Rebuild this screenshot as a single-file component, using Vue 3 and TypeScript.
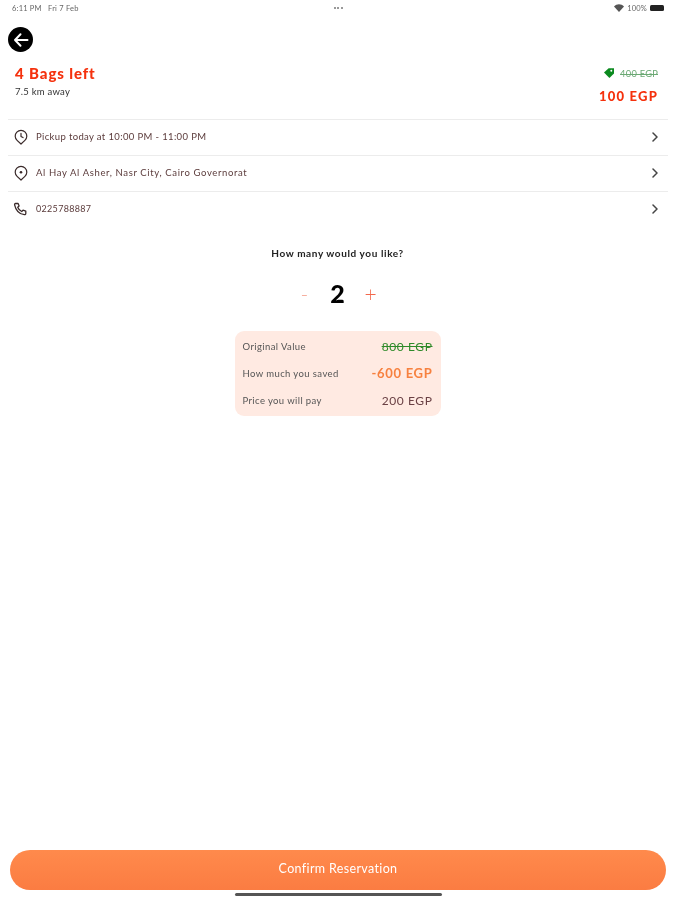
<template>
  <div class="page">
    <div class="status">
      <span class="status-time">6:11 PM&nbsp;&nbsp;&nbsp;Fri 7 Feb</span>
      <span class="status-dots"><i></i><i></i><i></i></span>
      <span class="status-right">
        <svg width="10" height="8" viewBox="0 0 10 8"><path d="M0 2.400C2.800-.5 7.200-.5 10 2.400L5 8Z" fill="#555" /></svg>
        <span>100%</span>
        <span class="battery"></span>
      </span>
    </div>

    <button class="back" aria-label="Back">
      <svg width="18" height="18" viewBox="0 0 18 18" fill="none" stroke="#fff" stroke-width="2" stroke-linecap="round" stroke-linejoin="round">
        <path d="M15.500 9H3M8.500 3.200 3 9l5.500 5.800" />
      </svg>
    </button>

    <div class="summary">
      <div>
        <div class="bags">4 Bags left</div>
        <div class="distance">7.5 km away</div>
      </div>
      <div class="prices">
        <div class="old-line">
          <svg width="12" height="12" viewBox="0 0 12 12"><path d="M1 5.500 5.600 1.200H11v5.200L6.400 11Z" fill="#0b8a1f" /><circle cx="8.300" cy="3.800" r="1" fill="#fff" /></svg>
          <span class="old-price">400 EGP</span>
        </div>
        <div class="new-price">100 EGP</div>
      </div>
    </div>

    <ul class="rows">
      <li v-for="row in rows" :key="row.text" class="row">
        <svg v-if="row.icon === 'clock'" class="row-icon" width="16" height="16" viewBox="0 0 16 16" fill="none" stroke="#3a2a2a" stroke-width="1.2" stroke-linecap="round" stroke-linejoin="round">
          <path d="M8 15 4.100 11.400A5.800 5.800 0 1 1 11.900 11.400Z" />
          <path d="M8 4.400V7.400L10 8.600" />
        </svg>
        <svg v-else-if="row.icon === 'pin'" class="row-icon" width="16" height="16" viewBox="0 0 16 16" fill="none" stroke="#3a2a2a" stroke-width="1.2" stroke-linejoin="round">
          <path d="M8 15 4.100 11.400A5.800 5.800 0 1 1 11.900 11.400Z" />
          <circle cx="8" cy="7.200" r="1.300" fill="#3a2a2a" stroke="none" />
        </svg>
        <svg v-else class="row-icon" width="16" height="16" viewBox="0 0 16 16" fill="none" stroke="#3a2a2a" stroke-width="1.300" stroke-linecap="round" stroke-linejoin="round">
          <path d="M2.500 2.500h2.600l1 2.600-1.400 1.200c.7 1.900 2.100 3.400 4 4.200l1.300-1.300 2.800 1v2.400c0 .8-.7 1.200-1.400 1.100C6.300 13 2.800 9.400 1.600 3.800 1.500 3.100 1.900 2.500 2.500 2.500Z" />
        </svg>
        <span class="row-text" :class="`row-${row.icon}`">{{ row.text }}</span>
        <svg class="chevron" width="8" height="10" viewBox="0 0 8 10" fill="none" stroke="#444" stroke-width="1.500" stroke-linecap="round" stroke-linejoin="round">
          <path d="M2 1 6 5 2 9" />
        </svg>
      </li>
    </ul>

    <div class="question">How many would you like?</div>

    <div class="stepper">
      <span class="minus">-</span>
      <span class="count">{{ count }}</span>
      <span class="plus">+</span>
    </div>

    <div class="receipt">
      <div class="receipt-row">
        <span>Original Value</span>
        <span class="value-old">800 EGP</span>
      </div>
      <div class="receipt-row">
        <span>How much you saved</span>
        <span class="value-saved">-600 EGP</span>
      </div>
      <div class="receipt-row">
        <span>Price you will pay</span>
        <span class="value-pay">200 EGP</span>
      </div>
    </div>

    <div class="footer">
      <button class="confirm">Confirm Reservation</button>
      <div class="home-bar"></div>
    </div>
  </div>
</template>

<script setup lang="ts">
import { ref } from 'vue'

interface InfoRow {
  icon: 'clock' | 'pin' | 'phone'
  text: string
}

const count = ref(2)

const rows: InfoRow[] = [
  { icon: 'clock', text: 'Pickup today at 10:00 PM - 11:00 PM' },
  { icon: 'pin', text: 'Al Hay Al Asher, Nasr City, Cairo Governorat' },
  { icon: 'phone', text: '0225788887' },
]
</script>

<style>
body {
  margin: 0;
  background: #fff;
}
</style>

<style scoped>
.page {
  width: 675px;
  height: 900px;
  display: flex;
  flex-direction: column;
  font-family: Lato, "Open Sans", sans-serif;
  color: #222;
  overflow: hidden;
  filter: blur(0.45px);
}

/* status bar */
.status {
  height: 16px;
  padding: 0 11px 0 12px;
  display: flex;
  align-items: center;
  justify-content: space-between;
  font-size: 7.5px;
  letter-spacing: 0.2px;
  color: #666;
}

.status-time {
  width: 120px;
}

.status-dots {
  display: flex;
  gap: 1.5px;
}

.status-dots i {
  width: 2px;
  height: 2px;
  border-radius: 50%;
  background: #777;
}

.status-right {
  width: 120px;
  display: flex;
  justify-content: flex-end;
  align-items: center;
  gap: 3px;
}

.battery {
  width: 14px;
  height: 6px;
  border-radius: 1.5px;
  background: #222;
}

.back {
  width: 25px;
  height: 25px;
  margin: 11px 0 0 8px;
  padding: 0;
  border: 0;
  border-radius: 50%;
  background: #000;
  display: flex;
  align-items: center;
  justify-content: center;
}

/* bags and price */
.summary {
  margin-top: 11px;
  padding: 0 17px 0 15px;
  height: 56px;
  display: flex;
  justify-content: space-between;
}

.bags {
  font-size: 15px;
  line-height: 20px;
  font-weight: 900;
  letter-spacing: 0.9px;
  color: #f5310d;
}

.distance {
  margin-top: 3px;
  font-size: 9.5px;
  line-height: 12px;
  letter-spacing: 0.25px;
  color: #333;
}

.prices {
  display: flex;
  flex-direction: column;
  align-items: flex-end;
}

.old-line {
  display: flex;
  align-items: center;
  gap: 5px;
  height: 20px;
}

.old-price {
  font-size: 9.3px;
  letter-spacing: 0.25px;
  color: #6aa873;
  text-decoration: line-through;
}

.new-price {
  margin-top: 4px;
  font-size: 13px;
  line-height: 18px;
  font-weight: 900;
  letter-spacing: 1.2px;
  color: #f5310d;
}

/* info rows */
.rows {
  margin: 0 7px 0 8px;
  padding: 0;
  list-style: none;
}

.row {
  height: 35px;
  padding: 0 9px 2px 5px;
  box-sizing: content-box;
  height: 33px;
  border-top: 1.5px solid #ececec;
  display: flex;
  align-items: center;
  gap: 7px;
}

.row-icon {
  flex: none;
}

.row-text {
  flex: 1;
  font-size: 9.5px;
  color: #5b3b3b;
}

.row-clock {
  letter-spacing: 0.36px;
}

.row-pin {
  letter-spacing: 0.63px;
}

.row-phone {
  font-size: 9px;
  letter-spacing: 0.32px;
}

.chevron {
  flex: none;
}

.question {
  margin-top: 19px;
  text-align: center;
  font-size: 10px;
  line-height: 14px;
  font-weight: 700;
  letter-spacing: 0.6px;
  color: #222;
}

.stepper {
  margin-top: 18px;
  display: flex;
  justify-content: center;
  align-items: center;
  height: 30px;
}

.minus,
.plus {
  width: 24px;
  text-align: center;
  font-size: 21px;
  font-weight: 300;
}

.minus {
  color: #f6a795;
}

.plus {
  color: #f2684c;
}

.count {
  width: 42px;
  text-align: center;
  font-size: 25px;
  font-weight: 900;
  color: #000;
}

/* receipt */
.receipt {
  align-self: center;
  width: 206px;
  height: 85px;
  margin-top: 23px;
  padding: 2px 8px 2px 8px;
  box-sizing: border-box;
  background: #ffeae2;
  border-radius: 9px;
  display: flex;
  flex-direction: column;
  justify-content: space-around;
}

.receipt-row {
  display: flex;
  justify-content: space-between;
  align-items: center;
  font-size: 9.5px;
  letter-spacing: 0.4px;
  color: #555;
}

.value-old,
.value-saved,
.value-pay {
  font-size: 12px;
  letter-spacing: 0.6px;
}

.value-old {
  color: #2f8a2a;
  text-decoration: line-through;
}

.value-saved {
  font-size: 13px;
  font-weight: 700;
  letter-spacing: 0.7px;
  color: #f7813f;
}

.value-pay {
  color: #6a4044;
}

/* confirm */
.footer {
  margin-top: auto;
  padding: 0 9px 4px 10px;
  display: flex;
  flex-direction: column;
  align-items: center;
}

.confirm {
  width: 100%;
  height: 40px;
  padding: 0 0 4px;
  border: 0;
  border-radius: 20px;
  background: linear-gradient(#ff8a4c, #fb7c42);
  color: #fff;
  font-family: inherit;
  font-size: 12.5px;
  letter-spacing: 0.35px;
}

.home-bar {
  width: 207px;
  height: 3px;
  margin-top: 3px;
  border-radius: 2px;
  background: #555;
}
</style>
